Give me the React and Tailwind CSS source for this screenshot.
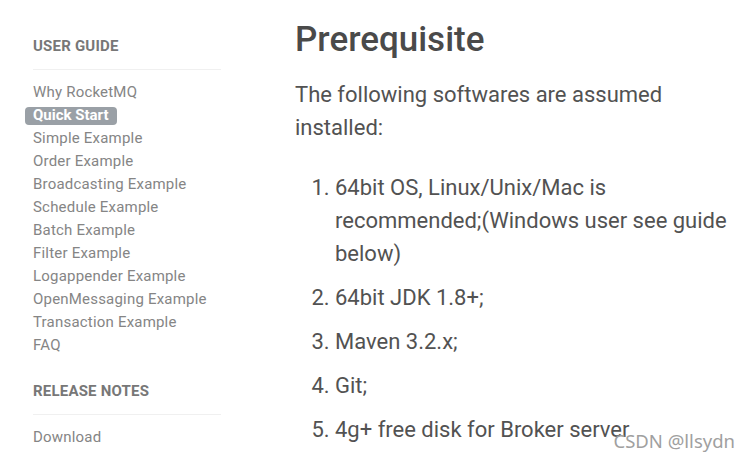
const GUIDE = [
  "Why RocketMQ",
  "Quick Start",
  "Simple Example",
  "Order Example",
  "Broadcasting Example",
  "Schedule Example",
  "Batch Example",
  "Filter Example",
  "Logappender Example",
  "OpenMessaging Example",
  "Transaction Example",
  "FAQ",
];

const PREREQS = [
  "64bit OS, Linux/Unix/Mac is recommended;(Windows user see guide below)",
  "64bit JDK 1.8+;",
  "Maven 3.2.x;",
  "Git;",
  "4g+ free disk for Broker server",
];

function SectionTitle({ children, className = "" }) {
  return (
    <div className={className}>
      <h3 className="text-[15px] leading-[20px] font-bold tracking-[0.2px] text-[#777]">{children}</h3>
      <div className="mt-[13px] h-px bg-[#f0f0f0]" />
    </div>
  );
}

export default function App() {
  return (
    <div
      className="relative h-[462px] w-[751px] overflow-hidden bg-white"
      style={{ fontFamily: "Roboto, 'Liberation Sans', sans-serif" }}
    >
      <div className="flex">
        <aside className="w-[188px] ml-[33px] shrink-0 pt-[36px]">
          <SectionTitle>USER GUIDE</SectionTitle>
          <ul className="mt-[11px]">
            {GUIDE.map((item) =>
              item === "Quick Start" ? (
                <li key={item} className="h-[23px] flex items-center">
                  <span className="-ml-2 px-2 h-[18px] flex items-center rounded-[4px] bg-[#9aa0a6] text-white font-bold text-[15px]">
                    {item}
                  </span>
                </li>
              ) : (
                <li key={item} className="text-[15px] leading-[23px] tracking-[0.2px] text-[#858585]">
                  {item}
                </li>
              )
            )}
          </ul>
          <SectionTitle className="mt-[24px]">RELEASE NOTES</SectionTitle>
          <ul className="mt-[11px]">
            <li className="text-[15px] leading-[23px] tracking-[0.2px] text-[#858585]">Download</li>
          </ul>
        </aside>

        <main className="ml-[74px] w-[440px] pt-[18px] text-[#525252]">
          <h1 className="text-[35px] leading-[44px] font-medium text-[#4a4a4a]">Prerequisite</h1>
          <p className="mt-[16px] text-[22px] leading-[33px]">
            The following softwares are assumed installed:
          </p>
          <ol className="mt-[27px] list-decimal pl-[40px] text-[22px] leading-[33px]">
            {PREREQS.map((p) => (
              <li key={p} className="mb-[11px]">
                {p}
              </li>
            ))}
          </ol>
        </main>
      </div>

      <div
        className="absolute right-[16px] top-[428px] text-[18.5px] leading-[26px] text-[#a0a0a0]"
        style={{ fontFamily: "'Noto Sans', sans-serif" }}
      >
        CSDN @llsydn
      </div>
    </div>
  );
}
